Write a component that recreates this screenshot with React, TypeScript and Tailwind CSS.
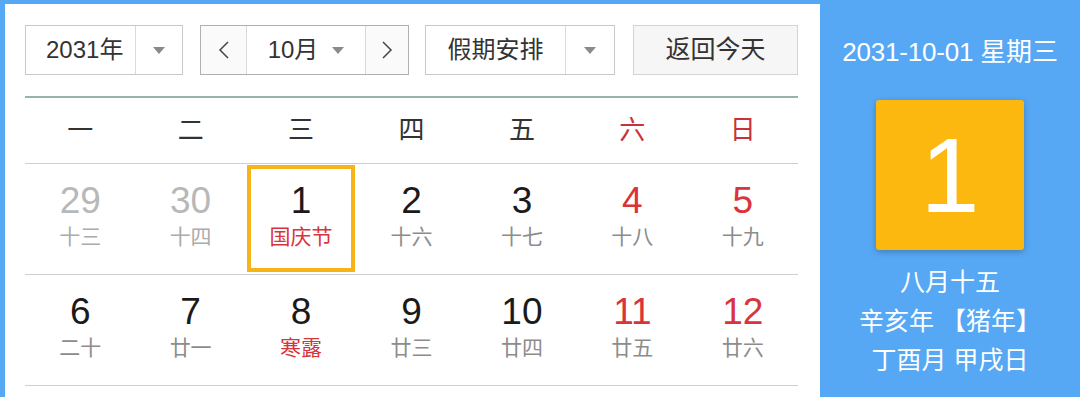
import React from 'react';

const FONT = { fontFamily: '"Liberation Sans", "Noto Sans CJK SC", sans-serif' };

type Day = { n: number; lunar: string; muted?: boolean; red?: boolean; festival?: boolean; selected?: boolean };

const weekdays = ['一', '二', '三', '四', '五', '六', '日'];

const rows: Day[][] = [
    [
        { n: 29, lunar: '十三', muted: true },
        { n: 30, lunar: '十四', muted: true },
        { n: 1, lunar: '国庆节', festival: true, selected: true },
        { n: 2, lunar: '十六' },
        { n: 3, lunar: '十七' },
        { n: 4, lunar: '十八', red: true },
        { n: 5, lunar: '十九', red: true },
    ],
    [
        { n: 6, lunar: '二十' },
        { n: 7, lunar: '廿一' },
        { n: 8, lunar: '寒露', festival: true },
        { n: 9, lunar: '廿三' },
        { n: 10, lunar: '廿四' },
        { n: 11, lunar: '廿五', red: true },
        { n: 12, lunar: '廿六', red: true },
    ],
];

function Caret() {
    return <span className="block w-0 h-0 border-l-[6px] border-r-[6px] border-t-[7px] border-l-transparent border-r-transparent border-t-[#8a8a8a]" />;
}

function Chevron({ dir }: { dir: 'left' | 'right' }) {
    return (
        <svg width="12" height="20" viewBox="0 0 12 20" fill="none">
            <path
                d={dir === 'left' ? 'M10 2 L2 10 L10 18' : 'M2 2 L10 10 L2 18'}
                stroke="#444"
                strokeWidth="1.5"
            />
        </svg>
    );
}

export default function App() {
    return (
        <main className="w-[1080px] h-[397px] bg-[#56a8f4] flex overflow-hidden" style={FONT}>
            {/* calendar panel */}
            <section className="ml-[5px] mt-[4px] w-[815px] bg-white pl-[20px] pr-[22px] pt-[21px] flex flex-col">
                <div className="flex items-center h-[50px] text-[24px] text-[#333]">
                    <div className="flex h-full w-[158px] border border-[#c9c9c9]">
                        <span className="flex-1 flex items-center pl-[20px]">2031年</span>
                        <span className="w-[47px] border-l border-[#dadada] flex items-center justify-center"><Caret /></span>
                    </div>

                    <div className="flex h-full w-[209px] ml-[17px] border border-[#b0b0b0]">
                        <span className="w-[45px] bg-[#fafafa] flex items-center justify-center"><Chevron dir="left" /></span>
                        <span className="w-[120px] border-l border-r border-[#dadada] flex items-center justify-center gap-[14px]">
                            10月 <Caret />
                        </span>
                        <span className="flex-1 bg-[#fafafa] flex items-center justify-center"><Chevron dir="right" /></span>
                    </div>

                    <div className="flex h-full w-[190px] ml-[16px] border border-[#c9c9c9]">
                        <span className="flex-1 flex items-center justify-center">假期安排</span>
                        <span className="w-[49px] border-l border-[#dadada] flex items-center justify-center"><Caret /></span>
                    </div>

                    <button className="h-full w-[165px] ml-[18px] border border-[#d4d4d4] bg-[#f6f6f6] text-[25px] text-[#333]">
                        返回今天
                    </button>
                </div>

                <div className="mt-[21px] h-[2px] bg-[#98b2ae]" />

                <div className="grid grid-cols-7 h-[66px] items-center border-b border-[#cfcfcf] text-[26px]">
                    {weekdays.map((w, i) => (
                        <div key={w} className={`text-center ${i >= 5 ? 'text-[#c8323a]' : 'text-[#333]'}`}>{w}</div>
                    ))}
                </div>

                {rows.map((row, r) => (
                    <div key={r} className="grid grid-cols-7 h-[111px] border-b border-[#cfcfcf]">
                        {row.map((d) => (
                            <div key={d.n} className="relative flex flex-col items-center pt-[16px]">
                                {d.selected && (
                                    <div className="absolute left-[1px] right-[1px] top-[1px] bottom-[2px] border-[4px] border-[#f7b418]" />
                                )}
                                <span
                                    className={`text-[37px] leading-[42px] ${d.muted ? 'text-[#b8b8b8]' : d.red ? 'text-[#d9333c]' : 'text-[#1a1a1a]'}`}
                                >
                                    {d.n}
                                </span>
                                <span
                                    className={`mt-[1px] text-[21px] leading-[28px] ${d.festival ? 'text-[#d9333c]' : d.muted ? 'text-[#ababab]' : 'text-[#8c8c8c]'}`}
                                >
                                    {d.lunar}
                                </span>
                            </div>
                        ))}
                    </div>
                ))}
            </section>

            {/* today panel */}
            <aside className="flex-1 flex flex-col items-center text-white pt-[35px]">
                <p className="text-[26px] leading-[34px] tracking-[-0.2px]">2031-10-01 星期三</p>
                <div className="mt-[31px] w-[148px] h-[150px] bg-[#fdb80f] rounded-[3px] shadow-[0_2px_6px_rgba(0,0,0,0.25)] flex items-center justify-center">
                    <span className="text-[106px] leading-none">1</span>
                </div>
                <div className="mt-[13px] flex flex-col items-center text-[25px] leading-[39px]">
                    <span>八月十五</span>
                    <span>辛亥年 【猪年】</span>
                    <span>丁酉月 甲戌日</span>
                </div>
            </aside>
        </main>
    );
}
